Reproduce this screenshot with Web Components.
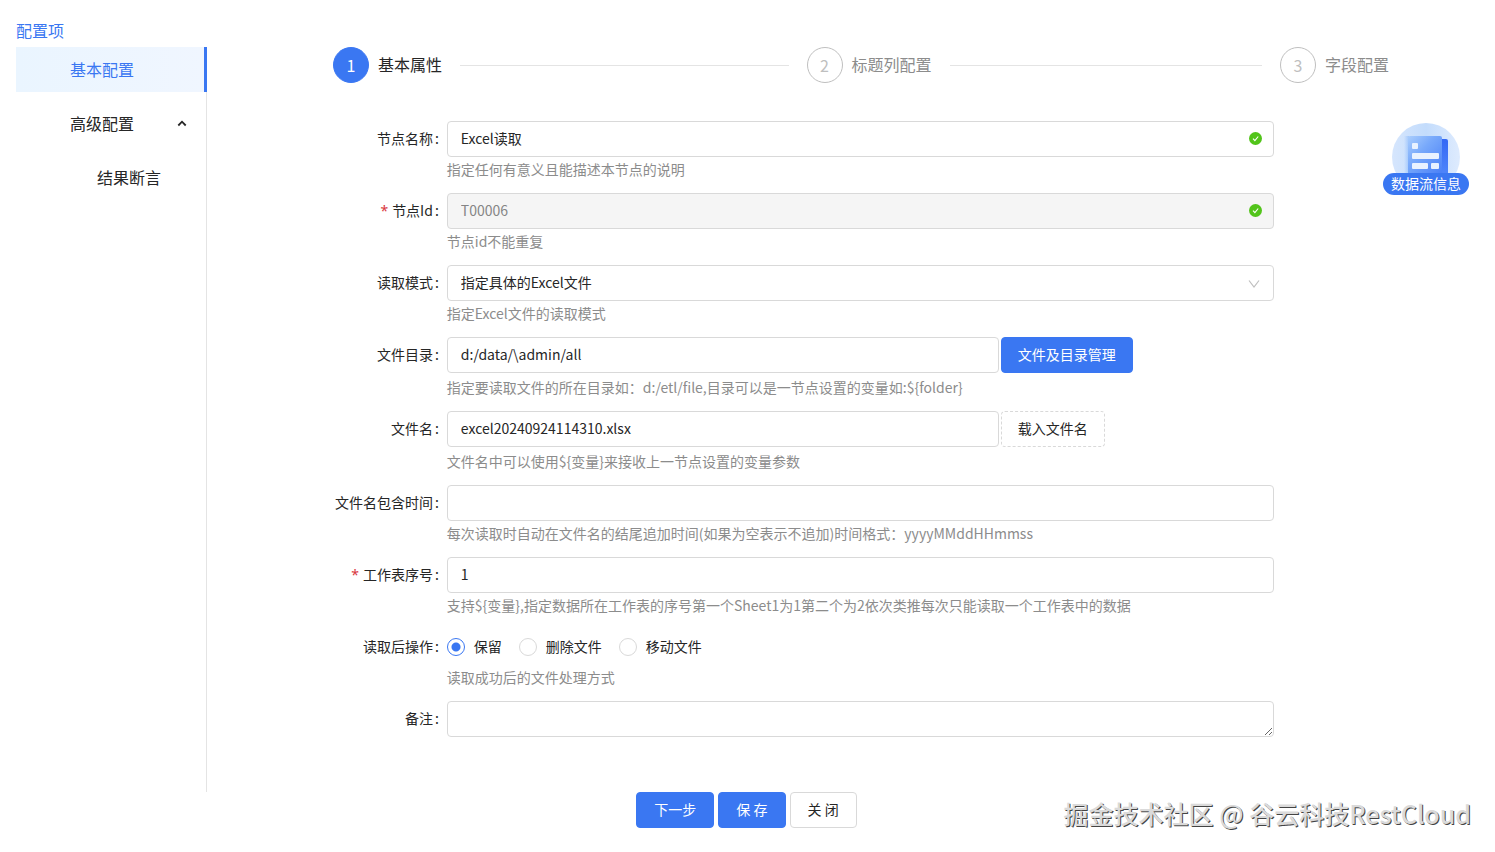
<!DOCTYPE html>
<html lang="zh-CN">
<head>
<meta charset="utf-8">
<meta name="viewport" content="width=device-width, initial-scale=1">
<title>Excel读取</title>
<style>
  :root {
    --primary: #3a77f2;
    --text: #262626;
    --muted: #8c8c8c;
    --border: #d9d9d9;
  }
  body {
    margin: 0;
    background: #fff;
    color: var(--text);
    font: 14px/24px "Noto Sans CJK SC", "Noto Sans", sans-serif;
  }
</style>
</head>
<body>
<node-config-page>
  <side-menu slot="side" heading="配置项">
    <side-item active>基本配置</side-item>
    <side-item expandable>高级配置</side-item>
    <side-item nested>结果断言</side-item>
  </side-menu>

  <step-bar slot="steps">
    <step-item number="1" active>基本属性</step-item>
    <step-item number="2">标题列配置</step-item>
    <step-item number="3" last>字段配置</step-item>
  </step-bar>

  <text-field label="节点名称" value="Excel读取" valid>指定任何有意义且能描述本节点的说明</text-field>
  <text-field label="节点Id" value="T00006" required disabled valid>节点id不能重复</text-field>
  <select-field label="读取模式" value="指定具体的Excel文件">指定Excel文件的读取模式</select-field>
  <text-field label="文件目录" value="d:/data/\admin/all" short>
    <ui-button slot="action" kind="primary">文件及目录管理</ui-button>
    指定要读取文件的所在目录如：d:/etl/file,目录可以是一节点设置的变量如:${folder}
  </text-field>
  <text-field label="文件名" value="excel20240924114310.xlsx" short>
    <ui-button slot="action" kind="dashed">载入文件名</ui-button>
    文件名中可以使用${变量}来接收上一节点设置的变量参数
  </text-field>
  <text-field label="文件名包含时间" value="">每次读取时自动在文件名的结尾追加时间(如果为空表示不追加)时间格式：yyyyMMddHHmmss</text-field>
  <text-field label="工作表序号" value="1" required>支持${变量},指定数据所在工作表的序号第一个Sheet1为1第二个为2依次类推每次只能读取一个工作表中的数据</text-field>
  <radio-field label="读取后操作" options="保留,删除文件,移动文件">读取成功后的文件处理方式</radio-field>
  <area-field label="备注"></area-field>

  <ui-button slot="footer" kind="primary">下一步</ui-button>
  <ui-button slot="footer" kind="primary">保 存</ui-button>
  <ui-button slot="footer">关 闭</ui-button>

  <flow-info slot="float">数据流信息</flow-info>
  <water-mark slot="float">掘金技术社区 @ 谷云科技RestCloud</water-mark>
</node-config-page>

<script>
class NodeConfigPage extends HTMLElement {
  constructor() {
    super();
    this.attachShadow({ mode: "open" });
    this.shadowRoot.innerHTML = `
      <style>
        :host { display: block; position: relative; padding: 18px 14px 24px 16px; }
        .layout { display: flex; align-items: stretch; }
        main { flex: 1; min-width: 0; padding: 29px 0 55px 33px; }
        footer { display: flex; justify-content: center; gap: 4px; padding-right: 4px; }
      </style>
      <div class="layout">
        <slot name="side"></slot>
        <main>
          <slot name="steps"></slot>
          <form><slot></slot></form>
        </main>
      </div>
      <footer><slot name="footer"></slot></footer>
      <slot name="float"></slot>
    `;
  }
}

class SideMenu extends HTMLElement {
  constructor() {
    super();
    this.attachShadow({ mode: "open" });
    this.shadowRoot.innerHTML = `
      <style>
        :host { display: flex; flex-direction: column; flex: 0 0 191px; }
        h2 { margin: 0 0 5px; font-size: 16px; line-height: 24px; font-weight: 400; color: var(--primary); }
        nav { flex: 1; box-shadow: inset -1px 0 #e4e4e4; }
      </style>
      <h2>${this.getAttribute("heading")}</h2>
      <nav><slot></slot></nav>
    `;
  }
}

class SideItem extends HTMLElement {
  constructor() {
    super();
    this.attachShadow({ mode: "open" });
    const arrow = this.hasAttribute("expandable")
      ? `<svg width="10" height="8" viewBox="0 0 10 8" aria-hidden="true"><path d="M1.3 6.5 5 2.7 8.7 6.5" fill="none" stroke="currentColor" stroke-width="1.8"/></svg>`
      : "";
    this.shadowRoot.innerHTML = `
      <style>
        :host { display: block; margin-bottom: 9px; }
        a {
          display: flex;
          align-items: center;
          justify-content: space-between;
          box-sizing: border-box;
          height: 45px;
          padding: 0 20px 2px 54px;
          font-size: 16px;
          color: inherit;
          text-decoration: none;
        }
        :host([nested]) a { padding-left: 81px; }
        :host([active]) a {
          color: var(--primary);
          background: linear-gradient(90deg, #eaf5ff, #f0f6ff);
          border-right: 3px solid var(--primary);
        }
      </style>
      <a href="#"><slot></slot>${arrow}</a>
    `;
  }
}

class StepBar extends HTMLElement {
  constructor() {
    super();
    this.attachShadow({ mode: "open" });
    this.shadowRoot.innerHTML = `
      <style>
        :host { display: flex; gap: 18px; margin: 0 92px 38px 93px; }
      </style>
      <slot></slot>
    `;
  }
}

class StepItem extends HTMLElement {
  constructor() {
    super();
    this.attachShadow({ mode: "open" });
    this.shadowRoot.innerHTML = `
      <style>
        :host { display: flex; align-items: center; flex: 1; font-size: 16px; color: var(--muted); }
        :host([last]) { flex: none; }
        .dot {
          box-sizing: border-box;
          width: 36px;
          height: 36px;
          margin-right: 9px;
          border: 1px solid #bfbfbf;
          border-radius: 50%;
          line-height: 34px;
          text-align: center;
          color: #bfbfbf;
        }
        .title { padding-bottom: 2px; }
        .line { flex: 1; height: 1px; margin-left: 18px; background: #e4e4e4; }
        :host([last]) .line { display: none; }
        :host([active]) { color: var(--text); }
        :host([active]) .dot { color: #fff; background: var(--primary); border-color: var(--primary); }
      </style>
      <span class="dot">${this.getAttribute("number")}</span>
      <span class="title"><slot></slot></span>
      <span class="line"></span>
    `;
  }
}

class UiButton extends HTMLElement {
  constructor() {
    super();
    this.attachShadow({ mode: "open" });
    this.shadowRoot.innerHTML = `
      <style>
        :host { display: block; }
        button {
          display: block;
          height: 36px;
          padding: 0 17px 2px;
          border: 1px solid var(--border);
          border-radius: 4px;
          background: #fff;
          color: inherit;
          font: inherit;
          white-space: nowrap;
          cursor: pointer;
        }
        :host([slot="action"]) button { padding: 0 16px 2px; }
        :host([kind="primary"]) button { background: var(--primary); border-color: var(--primary); color: #fff; }
        :host([kind="dashed"]) button { border-style: dashed; }
      </style>
      <button type="button"><slot></slot></button>
    `;
  }
}

// Shared row: label on the left, control with its help text on the right.
class FormField extends HTMLElement {
  constructor() {
    super();
    this.attachShadow({ mode: "open" });
    this.shadowRoot.innerHTML = `
      <style>
        :host { display: grid; grid-template-columns: 1fr 4fr 1fr; }
        .label { padding-right: 8px; line-height: 34px; text-align: right; white-space: nowrap; }
        .label::after { content: ":"; margin-left: 2px; }
        .required { margin-right: 4px; color: #d9363e; font-family: "Noto Sans", sans-serif; }
        .control { position: relative; display: flex; align-items: flex-start; gap: 2px; height: 36px; }
        :host([short]) .control { height: 38px; }
        .help { height: 24px; margin-bottom: 12px; color: var(--muted); white-space: nowrap; }
        input[type="text"], select, textarea {
          box-sizing: border-box;
          width: 100%;
          height: 36px;
          margin: 0;
          padding: 0 13px 2px;
          border: 1px solid var(--border);
          border-radius: 4px;
          background: #fff;
          color: inherit;
          font: inherit;
          appearance: none;
        }
        :host([short]) input[type="text"] { width: 66.7%; }
        input[type="text"]:disabled { background: #f5f5f5; color: #858585; }
        .mark { position: absolute; right: 12px; top: 11px; }
        .arrow { position: absolute; right: 14px; top: 14px; pointer-events: none; }
        textarea { display: block; padding: 5px 13px; resize: vertical; }
        .radios { display: flex; gap: 17px; line-height: 34px; }
        .radios label { display: flex; align-items: center; gap: 9px; height: 36px; }
        .radios span { padding-bottom: 2px; }
        input[type="radio"] {
          appearance: none;
          box-sizing: border-box;
          width: 18px;
          height: 18px;
          margin: 0;
          border: 1px solid var(--border);
          border-radius: 50%;
        }
        input[type="radio"]:checked {
          border-color: var(--primary);
          background: radial-gradient(circle, var(--primary) 4px, #fff 5px);
        }
      </style>
      ${this.labelMarkup()}
      <div>
        <div class="control">${this.controlMarkup()}<slot name="action"></slot></div>
        <div class="help"><slot></slot></div>
      </div>
    `;
  }

  labelMarkup() {
    const star = this.hasAttribute("required") ? `<span class="required">*</span>` : "";
    return `<label class="label" for="control">${star}${this.getAttribute("label")}</label>`;
  }

  controlMarkup() {
    return "";
  }
}

class TextField extends FormField {
  controlMarkup() {
    const disabled = this.hasAttribute("disabled") ? "disabled" : "";
    const mark = this.hasAttribute("valid")
      ? `<svg class="mark" width="13" height="13" viewBox="0 0 13 13" aria-hidden="true">
          <circle cx="6.5" cy="6.5" r="6.5" fill="#52c41a"/>
          <path d="M4 6.6 5.9 8.6 9.2 4.5" fill="none" stroke="#fff" stroke-width="1.1"/>
        </svg>`
      : "";
    return `<input id="control" type="text" value="${this.getAttribute("value")}" ${disabled}>${mark}`;
  }
}

class SelectField extends FormField {
  controlMarkup() {
    return `
      <select id="control"><option>${this.getAttribute("value")}</option></select>
      <svg class="arrow" width="12" height="10" viewBox="0 0 12 10" aria-hidden="true"><path d="M1 1.5 6 8 11 1.5" fill="none" stroke="#bfbfbf" stroke-width="1.2"/></svg>
    `;
  }
}

class RadioField extends FormField {
  labelMarkup() {
    return `<span class="label" id="caption">${this.getAttribute("label")}</span>`;
  }

  controlMarkup() {
    const items = this.getAttribute("options").split(",").map((text, i) =>
      `<label><input type="radio" name="after" ${i === 0 ? "checked" : ""}><span>${text}</span></label>`);
    return `<div class="radios" role="radiogroup" aria-labelledby="caption">${items.join("")}</div>`;
  }
}

class AreaField extends FormField {
  constructor() {
    super();
    this.shadowRoot.querySelector(".help").remove();
  }

  controlMarkup() {
    return `<textarea id="control" rows="1"></textarea>`;
  }
}

class FlowInfo extends HTMLElement {
  constructor() {
    super();
    this.attachShadow({ mode: "open" });
    this.shadowRoot.innerHTML = `
      <style>
        :host { position: absolute; top: 123px; right: 26px; }
        button {
          display: flex;
          flex-direction: column;
          align-items: center;
          padding: 0;
          border: 0;
          background: none;
          font: inherit;
          cursor: pointer;
        }
        svg { display: block; height: 50px; }
        span { padding: 0 8px 2px; border-radius: 11px; background: var(--primary); color: #fff; line-height: 20px; }
      </style>
      <button type="button">
        <svg width="68" height="50" viewBox="0 0 68 50" aria-hidden="true">
          <defs>
            <linearGradient id="disc" x1="0" y1="0" x2="1" y2="0">
              <stop offset="0" stop-color="#d6e6fd"/><stop offset=".5" stop-color="#c3dcfc"/><stop offset="1" stop-color="#deebfe"/>
            </linearGradient>
            <linearGradient id="sheet" x1="0" y1="0" x2="1" y2="1">
              <stop offset="0" stop-color="#a9cdfd"/><stop offset=".4" stop-color="#78a9fb"/><stop offset="1" stop-color="#4a80f7"/>
            </linearGradient>
            <linearGradient id="glow" x1="0" y1="0" x2="1" y2="0">
              <stop offset="0" stop-color="#8fbcfc" stop-opacity="0"/><stop offset="1" stop-color="#8fbcfc" stop-opacity=".7"/>
            </linearGradient>
            <linearGradient id="back" x1="0" y1="0" x2="0" y2="1">
              <stop offset="0" stop-color="#3468f5"/><stop offset="1" stop-color="#4d84fa"/>
            </linearGradient>
          </defs>
          <circle cx="34" cy="34" r="34" fill="url(#disc)"/>
          <path d="M44 16h10q2 0 2 2v32H44z" fill="url(#back)"/>
          <path d="M12 13h5v37h-5z" fill="url(#glow)"/>
          <path d="M16 15q0-2 2-2h30q2 0 2 2v35H16z" fill="url(#sheet)"/>
          <g fill="#e9f2ff">
            <rect x="20" y="20" width="6" height="6" rx="1"/>
            <rect x="20" y="30" width="27" height="6" rx="1"/>
            <rect x="20" y="40" width="16" height="6" rx="1"/>
            <rect x="39" y="40" width="8" height="6" rx="1"/>
          </g>
        </svg>
        <span><slot></slot></span>
      </button>
    `;
  }
}

class WaterMark extends HTMLElement {
  constructor() {
    super();
    this.attachShadow({ mode: "open" });
    this.shadowRoot.innerHTML = `
      <style>
        :host {
          position: absolute;
          right: 24px;
          bottom: 21px;
          color: #dadada;
          font-size: 25px;
          font-weight: 500;
          line-height: 36px;
          text-shadow: 1px 1px 0 #444;
          white-space: nowrap;
          pointer-events: none;
        }
      </style>
      <slot></slot>
    `;
  }
}

customElements.define("node-config-page", NodeConfigPage);
customElements.define("side-menu", SideMenu);
customElements.define("side-item", SideItem);
customElements.define("step-bar", StepBar);
customElements.define("step-item", StepItem);
customElements.define("ui-button", UiButton);
customElements.define("text-field", TextField);
customElements.define("select-field", SelectField);
customElements.define("radio-field", RadioField);
customElements.define("area-field", AreaField);
customElements.define("flow-info", FlowInfo);
customElements.define("water-mark", WaterMark);
</script>
</body>
</html>
